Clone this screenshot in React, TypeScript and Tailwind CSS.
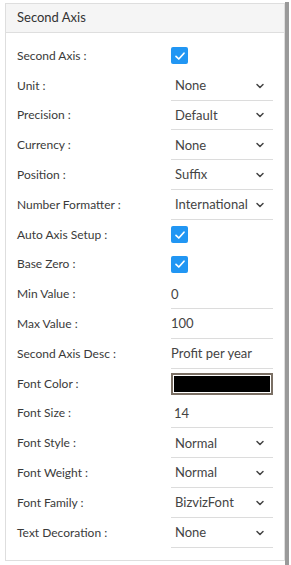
import { ChevronDown } from "lucide-react";

type Row =
  | { label: string; kind: "check" }
  | { label: string; kind: "select"; value: string }
  | { label: string; kind: "text"; value: string; pad?: boolean }
  | { label: string; kind: "color" };

const rows: Row[] = [
  { label: "Second Axis :", kind: "check" },
  { label: "Unit :", kind: "select", value: "None" },
  { label: "Precision :", kind: "select", value: "Default" },
  { label: "Currency :", kind: "select", value: "None" },
  { label: "Position :", kind: "select", value: "Suffix" },
  { label: "Number Formatter :", kind: "select", value: "International" },
  { label: "Auto Axis Setup :", kind: "check" },
  { label: "Base Zero :", kind: "check" },
  { label: "Min Value :", kind: "text", value: "0" },
  { label: "Max Value :", kind: "text", value: "100" },
  { label: "Second Axis Desc :", kind: "text", value: "Profit per year" },
  { label: "Font Color :", kind: "color" },
  { label: "Font Size :", kind: "text", value: "14", pad: true },
  { label: "Font Style :", kind: "select", value: "Normal" },
  { label: "Font Weight :", kind: "select", value: "Normal" },
  { label: "Font Family :", kind: "select", value: "BizvizFont" },
  { label: "Text Decoration :", kind: "select", value: "None" },
];

function Checkbox() {
  return (
    <div className="w-[17px] h-[17px] rounded-[2px] bg-[#2196f3] flex items-center justify-center">
      <svg width="12" height="12" viewBox="0 0 12 12" fill="none">
        <path d="M2 6.3 L4.8 9 L10 3.2" stroke="white" strokeWidth="1.7" strokeLinecap="round" strokeLinejoin="round" />
      </svg>
    </div>
  );
}

function Control({ row }: { row: Row }) {
  if (row.kind === "check") {
    return (
      <div className="h-full flex items-center">
        <Checkbox />
      </div>
    );
  }
  if (row.kind === "color") {
    return (
      <div className="h-full flex items-center">
        <div className="w-full h-[22px] border-2 border-[#7a6f64] bg-white p-[1px]">
          <div className="w-full h-full bg-black" />
        </div>
      </div>
    );
  }
  if (row.kind === "select") {
    return (
      <div className="h-full flex items-center justify-between border-b border-[#dcdcdc] pl-[4px] pr-[7px] pt-[1px]">
        <span className="text-[13px] text-[#444]">{row.value}</span>
        <ChevronDown size={12} strokeWidth={3} className="text-[#444]" />
      </div>
    );
  }
  return (
    <div className={"h-full flex items-center border-b border-[#dcdcdc] pt-[1px] " + (row.pad ? "pl-[3px]" : "pl-0")}>
      <span className="text-[13px] text-[#444]">{row.value}</span>
    </div>
  );
}

export default function App() {
  return (
    <div className="w-[291px] h-[565px] bg-white flex" style={{ fontFamily: "Lato, 'Open Sans', sans-serif" }}>
      <div className="ml-[5px] mt-[3px] w-[280px] h-[558px] border border-[#dedede] flex flex-col">
        <div className="h-[29px] bg-[#f5f5f5] border-b border-[#dedede] flex items-center pl-[11px]">
          <span className="text-[13px] text-[#333]">Second Axis</span>
        </div>
        <div className="px-[11px] pt-[8px]">
          {rows.map((row) => (
            <div key={row.label} className="grid grid-cols-[154px_102px] h-[29.8px]">
              <div className="flex items-center text-[12px] text-[#3a3a3a]">{row.label}</div>
              <Control row={row} />
            </div>
          ))}
        </div>
      </div>
      <div className="mt-[2px] w-[4px] h-[563px] bg-[#9a9a9a]" />
    </div>
  );
}
